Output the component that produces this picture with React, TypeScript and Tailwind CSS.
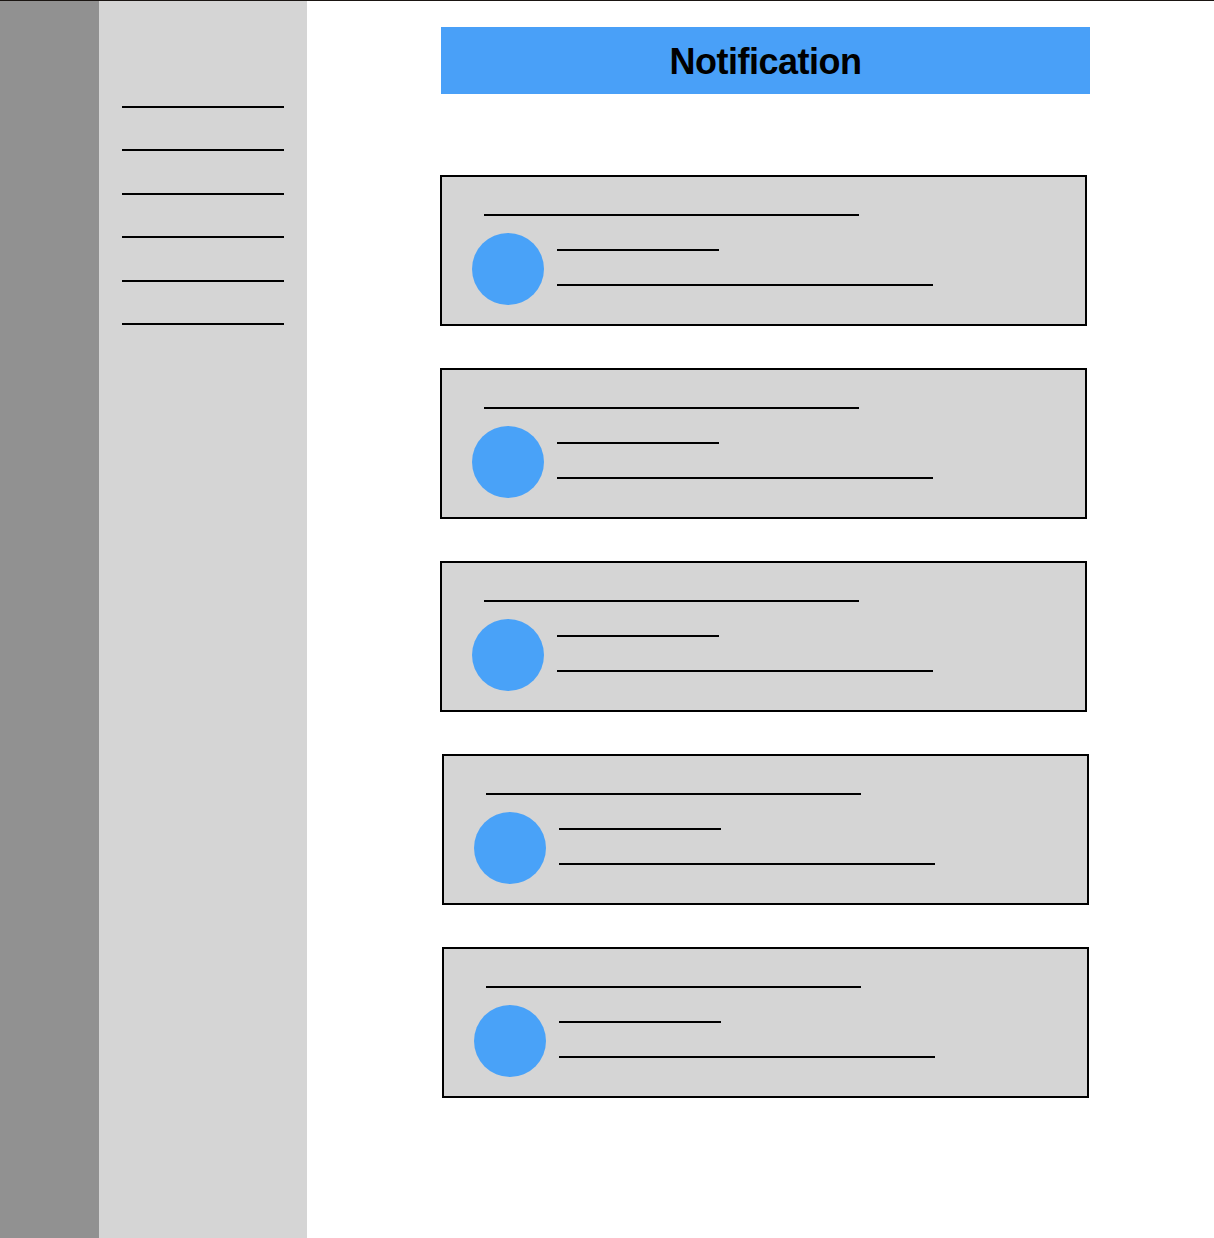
import React from 'react';

// sidebar menu placeholder lines: top margin before each one
const menuGaps = ['mt-[105px]', 'mt-[41px]', 'mt-[42px]', 'mt-[41px]', 'mt-[42px]', 'mt-[41px]'];

// notification cards: the last two sit 2px to the right in the mockup
const cards = [
  { id: 1, shift: '' },
  { id: 2, shift: '' },
  { id: 3, shift: '' },
  { id: 4, shift: 'ml-[2px]' },
  { id: 5, shift: 'ml-[2px]' },
];

function NotificationCard({ shift }: { shift: string }) {
  return (
    <div className={`w-[647px] h-[151px] border-2 border-black bg-[#d5d5d5] ${shift}`}>
      <div className="ml-[42px] mt-[37px] w-[375px] h-[2px] bg-black" />
      <div className="flex mt-[17px] ml-[30px]">
        <div className="w-[72px] h-[72px] rounded-full bg-[#49a2f8]" />
        <div className="ml-[13px] mt-[16px] flex flex-col">
          <div className="w-[162px] h-[2px] bg-black" />
          <div className="mt-[33px] w-[376px] h-[2px] bg-black" />
        </div>
      </div>
    </div>
  );
}

export default function App() {
  return (
    <div className="w-[1214px] h-[1238px] border-t border-[#1a1512] bg-white flex overflow-hidden">
      {/* Sidebars */}
      <div className="w-[99px] shrink-0 bg-[#919191]" />
      <div className="w-[208px] shrink-0 bg-[#d5d5d5] flex flex-col pl-[23px]">
        {menuGaps.map((gap, i) => (
          <div key={i} className={`${gap} w-[162px] h-[2px] bg-black`} />
        ))}
      </div>

      {/* Main */}
      <main className="flex-1 flex flex-col pl-[133px]">
        <div
          className="ml-[1px] mt-[26px] w-[649px] h-[67px] pt-[2px] bg-[#49a0f8] flex items-center justify-center text-black text-[36px] font-bold tracking-[-0.5px]"
          style={{ fontFamily: '"Liberation Sans", Arial, sans-serif' }}
        >
          Notification
        </div>
        <div className="mt-[81px] flex flex-col gap-[42px]">
          {cards.map((c) => (
            <NotificationCard key={c.id} shift={c.shift} />
          ))}
        </div>
      </main>
    </div>
  );
}
